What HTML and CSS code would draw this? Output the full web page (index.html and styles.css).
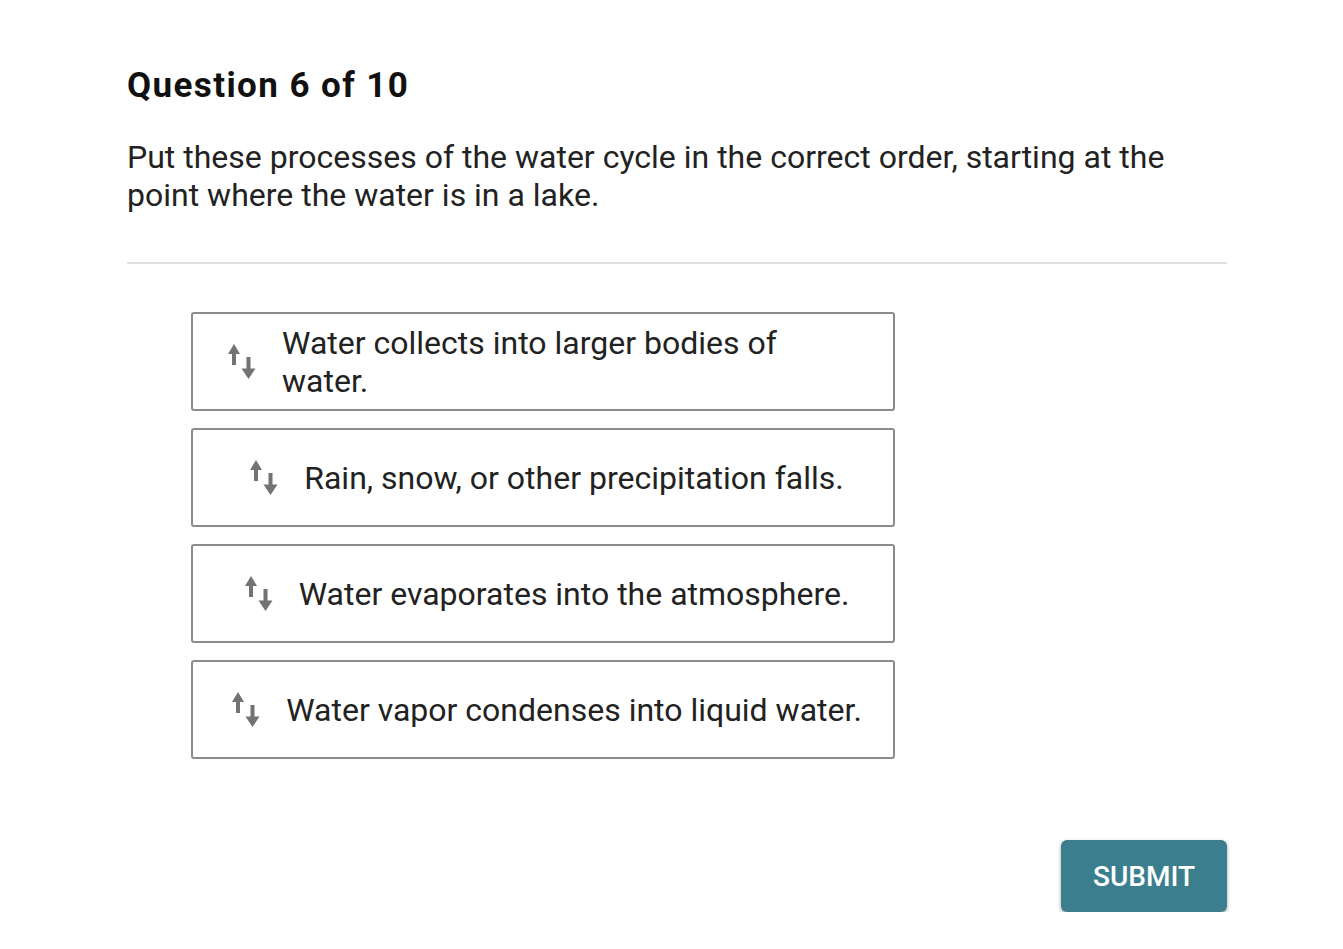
FILE: index.html
```html
<!DOCTYPE html>
<html>
<head>
<meta charset="utf-8">
<link rel="stylesheet" href="styles.css">
</head>
<body>
<main class="page">
  <h1 class="title">Question 6 of 10</h1>
  <p class="prompt">Put these processes of the water cycle in the correct order, starting at the point where the water is in a lake.</p>
  <hr class="divider">
  <ul class="options">
    <li class="option">
      <svg class="drag" viewBox="0 0 29 35" width="29" height="35"><path d="M0 10 L6 0 L12 10 Z M4 9 H8 V21 H4 Z M18.5 13 H22.5 V25 H18.5 Z M13.5 24.5 H27.5 L20.5 35 Z"/></svg>
      <span class="label">Water collects into larger bodies of water.</span>
    </li>
    <li class="option">
      <svg class="drag" viewBox="0 0 29 35" width="29" height="35"><path d="M0 10 L6 0 L12 10 Z M4 9 H8 V21 H4 Z M18.5 13 H22.5 V25 H18.5 Z M13.5 24.5 H27.5 L20.5 35 Z"/></svg>
      <span class="label">Rain, snow, or other precipitation falls.</span>
    </li>
    <li class="option">
      <svg class="drag" viewBox="0 0 29 35" width="29" height="35"><path d="M0 10 L6 0 L12 10 Z M4 9 H8 V21 H4 Z M18.5 13 H22.5 V25 H18.5 Z M13.5 24.5 H27.5 L20.5 35 Z"/></svg>
      <span class="label">Water evaporates into the atmosphere.</span>
    </li>
    <li class="option">
      <svg class="drag" viewBox="0 0 29 35" width="29" height="35"><path d="M0 10 L6 0 L12 10 Z M4 9 H8 V21 H4 Z M18.5 13 H22.5 V25 H18.5 Z M13.5 24.5 H27.5 L20.5 35 Z"/></svg>
      <span class="label">Water vapor condenses into liquid water.</span>
    </li>
  </ul>
  <div class="actions">
    <button class="submit">SUBMIT</button>
  </div>
</main>
</body>
</html>
```

FILE: styles.css
```css
html, body {
  margin: 0;
  padding: 0;
  background: #ffffff;
}
body {
  font-family: Roboto, "Liberation Sans", sans-serif;
  color: #222;
}
.page {
  width: 1100px;
  margin-left: 127px;
  padding-top: 65px;
}
.title {
  margin: 0;
  font-size: 35px;
  font-weight: 700;
  letter-spacing: 1.4px;
  line-height: 42px;
  color: #111;
}
.prompt {
  margin: 31px 0 0 0;
  font-size: 32px;
  line-height: 38px;
  color: #222;
}
.divider {
  margin: 48px 0 0 0;
  border: 0;
  height: 2px;
  background: #e0e0e0;
}
.options {
  list-style: none;
  margin: 48px 0 0 64px;
  padding: 0;
  display: flex;
  flex-direction: column;
  gap: 17px;
  width: 704px;
}
.option {
  box-sizing: border-box;
  height: 99px;
  border: 2px solid #8c8c8c;
  border-radius: 3px;
  padding: 0 27px 0 35px;
  display: flex;
  align-items: center;
  justify-content: center;
  gap: 25px;
}
.drag {
  flex: none;
  fill: #737373;
}
.label {
  font-size: 32px;
  line-height: 38px;
  color: #222;
}
.actions {
  display: flex;
  justify-content: flex-end;
  margin-top: 81px;
}
.submit {
  width: 166px;
  height: 72px;
  border: 0;
  border-radius: 6px;
  background: #3b7f8f;
  color: #fff;
  font-family: Roboto, "Liberation Sans", sans-serif;
  font-size: 28px;
  font-weight: 500;
  box-shadow: 0 2px 4px rgba(0,0,0,0.35);
}
```
